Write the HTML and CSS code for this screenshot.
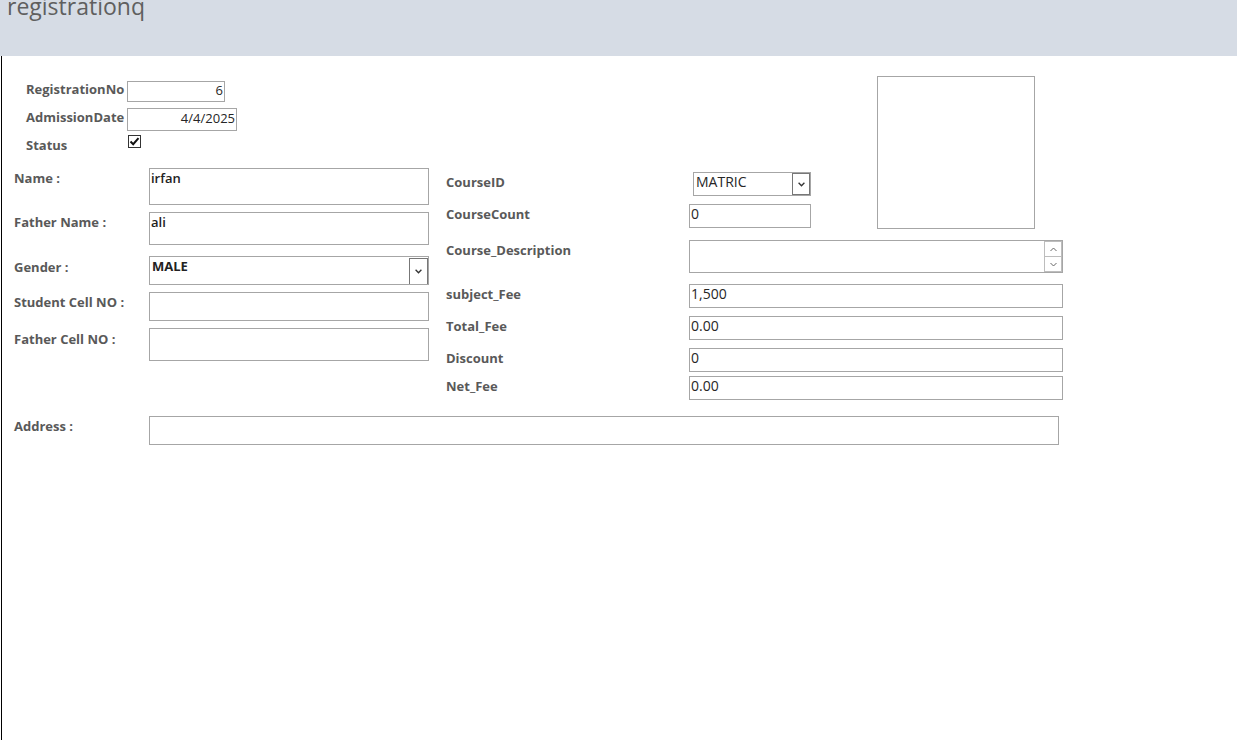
FILE: index.html
```html
<!DOCTYPE html>
<html>
<head>
<meta charset="utf-8">
<link rel="stylesheet" href="styles.css">
</head>
<body>
<header class="hdr"><h1 class="title">registrationq</h1></header>
<main class="form">
  <section class="top">
    <div class="reg">
      <div class="reg-row r1">
        <span class="lbl reg-lbl">RegistrationNo</span>
        <div class="box num w98">6</div>
      </div>
      <div class="reg-row r2">
        <span class="lbl reg-lbl lb2">AdmissionDate</span>
        <div class="box num w110">4/4/2025</div>
      </div>
      <div class="reg-row r3">
        <span class="lbl reg-lbl lb3">Status</span>
        <span class="chk"><svg width="11" height="11" viewBox="0 0 11 11"><path d="M1.5 5.5 L4.2 8.2 L9.5 2.2" fill="none" stroke="#111" stroke-width="2"/></svg></span>
      </div>
    </div>
    <div class="photo"></div>
  </section>

  <section class="mid">
    <div class="col-left">
      <div class="row h44">
        <span class="lbl ll">Name :</span>
        <div class="box lbox bold hb37">irfan</div>
      </div>
      <div class="row h44">
        <span class="lbl ll">Father Name :</span>
        <div class="box lbox bold hb33">ali</div>
      </div>
      <div class="row h36">
        <span class="lbl ll lp-gender">Gender :</span>
        <div class="box lbox combo bold hb29"><span class="cv">MALE</span><span class="dd dd-l"><svg width="7" height="5" viewBox="0 0 7 5"><path d="M0.6 0.8 L3.5 3.8 L6.4 0.8" fill="none" stroke="#333" stroke-width="1.3"/></svg></span></div>
      </div>
      <div class="row h36">
        <span class="lbl ll">Student Cell NO :</span>
        <div class="box lbox hb29"></div>
      </div>
      <div class="row">
        <span class="lbl ll lp-fcell">Father Cell NO :</span>
        <div class="box lbox hb33"></div>
      </div>
    </div>

    <div class="col-right">
      <div class="row h36">
        <span class="lbl rl lp-cid">CourseID</span>
        <div class="box combo cid"><span class="cv">MATRIC</span><span class="dd dd-s"><svg width="7" height="5" viewBox="0 0 7 5"><path d="M0.6 0.8 L3.5 3.8 L6.4 0.8" fill="none" stroke="#333" stroke-width="1.3"/></svg></span></div>
      </div>
      <div class="row h36">
        <span class="lbl rl">CourseCount</span>
        <div class="box rbox w122">0</div>
      </div>
      <div class="row h44">
        <span class="lbl rl">Course_Description</span>
        <div class="box rbox wide hb33 desc">
          <span class="sb">
            <span class="sbtn up"><svg width="7" height="5" viewBox="0 0 7 5"><path d="M0.5 4 L3.5 1 L6.5 4" fill="none" stroke="#666" stroke-width="1"/></svg></span>
            <span class="sbtn dn"><svg width="7" height="5" viewBox="0 0 7 5"><path d="M0.5 1 L3.5 4 L6.5 1" fill="none" stroke="#666" stroke-width="1"/></svg></span>
          </span>
        </div>
      </div>
      <div class="row h32">
        <span class="lbl rl">subject_Fee</span>
        <div class="box rbox wide">1,500</div>
      </div>
      <div class="row h32">
        <span class="lbl rl">Total_Fee</span>
        <div class="box rbox wide">0.00</div>
      </div>
      <div class="row h28">
        <span class="lbl rl">Discount</span>
        <div class="box rbox wide">0</div>
      </div>
      <div class="row">
        <span class="lbl rl">Net_Fee</span>
        <div class="box rbox wide">0.00</div>
      </div>
    </div>
  </section>

  <section class="addr">
    <span class="lbl ll">Address :</span>
    <div class="box abox"></div>
  </section>
</main>
</body>
</html>
```

FILE: styles.css
```css
* { box-sizing: border-box; }
html, body { margin: 0; padding: 0; background: #fff; }
body { font-family: "Open Sans", "Noto Sans", sans-serif; color: #595959; }

.hdr {
  height: 56px;
  background: #d6dce5;
  overflow: hidden;
}
.title {
  margin: -6px 0 0 7px;
  font-size: 23px;
  line-height: 24px;
  font-weight: 400;
  color: #5f5f5f;
}

.form {
  margin-left: 1px;
  border-left: 1px solid #000;
  min-height: calc(100vh - 56px);
}

.lbl {
  display: block;
  font-size: 13px;
  line-height: 17px;
  font-weight: 700;
  color: #595959;
  white-space: nowrap;
  padding-top: 2px;
}

.box {
  border: 1px solid #a6a6a6;
  background: #fff;
  color: #262626;
  font-size: 14px;
  line-height: 18px;
  height: 24px;
  padding: 0 1px;
  white-space: nowrap;
  overflow: hidden;
}

/* top block */
.top {
  display: flex;
  align-items: flex-start;
  padding-left: 24px;
  padding-top: 25px;
}
.reg { width: 851px; }
.reg-row { display: flex; align-items: flex-start; }
.r1 { height: 27px; }
.r2 { height: 27px; }
.r3 { height: 13px; }
.reg-lbl { width: 101px; padding-top: 1px; line-height: 15px; }
.lb2 { padding-top: 1.5px; }
.lb3 { padding-top: 2.5px; }
.num {
  text-align: right;
  font-size: 13px;
  line-height: 15px;
  padding-top: 1px;
}
.w98 { width: 98px; height: 21px; }
.w110 { width: 110px; height: 23px; padding-top: 2px; }
.chk {
  margin-left: 1px;
  width: 13px;
  height: 13px;
  border: 1px solid #333;
  display: flex;
  align-items: center;
  justify-content: center;
  background: #fff;
}
.photo {
  width: 158px;
  height: 153px;
  border: 1px solid #a6a6a6;
  margin-top: -5px;
  margin-bottom: -120px;
}

/* middle */
.mid {
  display: flex;
  align-items: flex-start;
  margin-top: 20px;
}
.col-left { width: 444px; padding-left: 12px; }
.col-right { flex: 1; }
.row { display: flex; align-items: flex-start; }
.h44 { height: 44px; }
.h36 { height: 36px; }
.h32 { height: 32px; }
.h28 { height: 28px; }

.ll { width: 135px; }
.lp-gender { padding-top: 2.5px; }
.lp-fcell { padding-top: 2.5px; }

.lbox { width: 280px; font-size: 13px; line-height: 17px; padding-top: 0.5px; }
.bold { font-weight: 600; color: #222; }
.hb37 { height: 37px; }
.hb33 { height: 33px; }
.hb29 { height: 29px; }

.combo { display: flex; justify-content: space-between; padding-right: 0; }
.combo .cv { padding-left: 1px; }
.dd {
  display: flex;
  align-items: center;
  justify-content: center;
  border: 1px solid #777;
  background: #fff;
}
.dd-l { width: 19px; height: 27px; }
.lbox.combo { font-weight: 700; }
.cid {
  margin-left: 4px;
  margin-top: 4px;
  width: 118px;
  height: 24px;
}
.cid .cv { padding-left: 1px; }
.dd-s { width: 18px; height: 22px; }

.rl { width: 243px; padding-top: 1.5px; }
.lp-cid { padding-top: 5.5px; }
.w122 { width: 122px; }
.wide { width: 374px; }
.desc { display: flex; justify-content: flex-end; padding-right: 0; }
.sb { display: flex; flex-direction: column; width: 18px; }
.sbtn {
  display: flex;
  align-items: center;
  justify-content: center;
  border: 1px solid #bdbdbd;
  background: #fff;
}
.up { height: 16px; }
.dn { height: 15px; border-top: none; }

/* address */
.addr {
  display: flex;
  align-items: flex-start;
  margin-top: 16px;
  padding-left: 12px;
}
.abox { width: 910px; height: 29px; }
```
